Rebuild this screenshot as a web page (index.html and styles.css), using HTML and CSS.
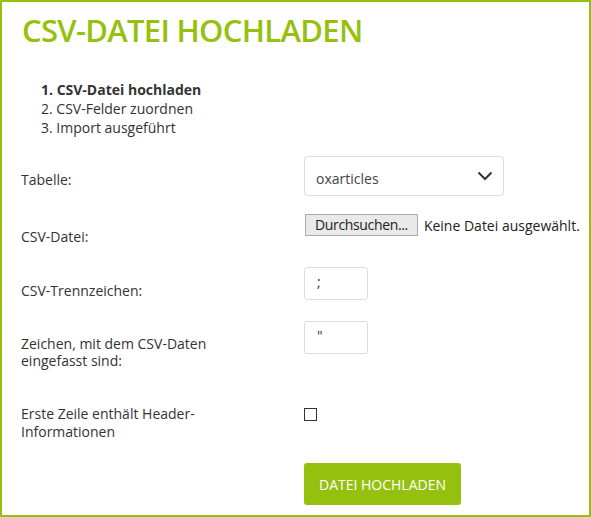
FILE: index.html
```html
<!DOCTYPE html>
<html lang="de">
<head>
    <meta charset="UTF-8">
    <meta name="viewport" content="width=device-width, initial-scale=1.0">
    <title>CSV-Datei hochladen</title>
    <link rel="stylesheet" href="styles.css">
</head>
<body>

<div class="import-box">
    <h1>CSV-Datei hochladen</h1>

    <div class="steps">
        <div class="step active">1. CSV-Datei hochladen</div>
        <div class="step">2. CSV-Felder zuordnen</div>
        <div class="step">3. Import ausgeführt</div>
    </div>

    <form class="import-form" onsubmit="return false;">
        <div class="row row-table">
            <label class="row-label">Tabelle:</label>
            <div class="select-wrap">
                <span class="select-value">oxarticles</span>
                <svg class="chevron" width="16" height="10" viewBox="0 0 16 10">
                    <path d="M1.5 1.5 L8 8 L14.5 1.5" fill="none" stroke="#333" stroke-width="2"/>
                </svg>
            </div>
        </div>

        <div class="row row-file">
            <label class="row-label">CSV-Datei:</label>
            <div class="file-input">
                <span class="file-button">Durchsuchen...</span>
                <span class="file-name">Keine Datei ausgewählt.</span>
            </div>
        </div>

        <div class="row row-sep">
            <label class="row-label">CSV-Trennzeichen:</label>
            <input class="small-input" type="text" value=";">
        </div>

        <div class="row row-quote">
            <label class="row-label">Zeichen, mit dem CSV-Daten eingefasst sind:</label>
            <input class="small-input" type="text" value='"'>
        </div>

        <div class="row row-header">
            <label class="row-label">Erste Zeile enthält Header-Informationen</label>
            <span class="checkbox"></span>
        </div>

        <div class="row row-submit">
            <span class="row-label"></span>
            <button class="submit-button">Datei hochladen</button>
        </div>
    </form>
</div>

</body>
</html>
```

FILE: styles.css
```css
* {
    box-sizing: border-box;
}
body {
    font-family: "Open Sans", Arial, sans-serif;
    font-size: 14px;
    color: #333;
    background: #fff;
    margin: 0;
}
.import-box {
    width: 591px;
    height: 517px;
    border: 2px solid #96c00e;
    padding: 0 19px;
    overflow: hidden;
}
h1 {
    color: #96c00e;
    font-size: 31px;
    font-weight: 600;
    letter-spacing: -0.7px;
    text-transform: uppercase;
    margin: 6px 0 0 1px;
    line-height: 44px;
}
.steps {
    margin: 28px 0 0 20px;
    line-height: 19px;
}
.step.active {
    font-weight: 700;
}
.import-form {
    margin-top: 19px;
}
.row {
    display: flex;
    align-items: flex-start;
}
.row-label {
    width: 283px;
    flex: none;
    line-height: 17px;
    padding-right: 60px;
}
.row-table {
    height: 58px;
}
.row-table .row-label {
    padding-top: 15px;
}
.select-wrap {
    width: 200px;
    height: 40px;
    border: 1px solid #ddd;
    border-radius: 4px;
    display: flex;
    align-items: center;
    justify-content: space-between;
    padding: 0 10px 0 11px;
    color: #444;
}
.select-value {
    padding-top: 5px;
}
.row-file {
    height: 53px;
}
.row-file .row-label {
    padding-top: 14px;
}
.file-input {
    display: flex;
    align-items: center;
    white-space: nowrap;
}
.file-button {
    display: inline-block;
    background: #e9e9e9;
    border: 1px solid #aaa;
    padding: 1px 9px;
    line-height: 18px;
    letter-spacing: -0.35px;
    margin-left: 1px;
    color: #222;
}
.file-name {
    margin-left: 6px;
    color: #222;
}
.row-sep {
    height: 54px;
}
.row-sep .row-label {
    padding-top: 15px;
}
.small-input {
    width: 64px;
    height: 33px;
    border: 1px solid #ddd;
    border-radius: 3px;
    font-family: inherit;
    font-size: 14px;
    color: #333;
    padding: 0 0 4px 12px;
}
.row-quote {
    height: 84px;
}
.row-quote .row-label {
    padding-top: 14px;
}
.row-header {
    height: 58px;
}
.row-header .row-label {
    line-height: 18px;
}
.checkbox {
    display: block;
    width: 13px;
    height: 13px;
    border: 1px solid #333;
    margin-top: 3px;
}
.submit-button {
    width: 157px;
    height: 42px;
    background: #96c00e;
    color: #fff;
    border: none;
    border-radius: 3px;
    font-family: inherit;
    font-size: 14px;
    text-transform: uppercase;
    cursor: pointer;
}
```
